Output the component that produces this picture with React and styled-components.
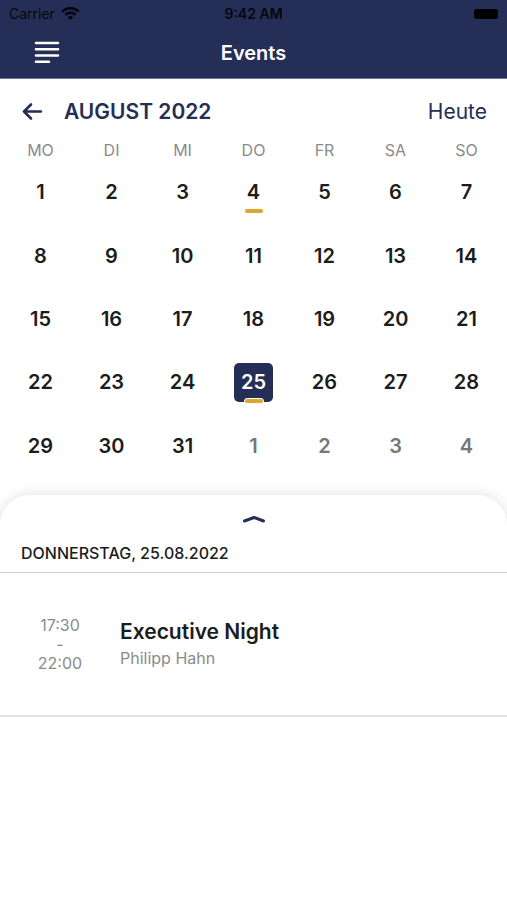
import React, { useState } from 'react';
import styled, { createGlobalStyle } from 'styled-components';

const NAVY = '#252e56';
const GOLD = '#dda62c';

const GlobalStyle = createGlobalStyle`
  * {
    box-sizing: border-box;
  }

  body {
    margin: 0;
    background: #fff;
    color: #1c1c1c;
    font-family: Inter, 'Liberation Sans', sans-serif;
  }

  button {
    padding: 0;
    border: 0;
    background: none;
    color: inherit;
    font: inherit;
    cursor: pointer;
  }
`;

const Page = styled.div`
  display: flex;
  flex-direction: column;
  min-height: 100vh;
  overflow: hidden;
`;

const Header = styled.header`
  background: ${NAVY};
  border-bottom: 1px solid #6e7594;
`;

const StatusBar = styled.div`
  display: grid;
  grid-template-columns: 1fr auto 1fr;
  align-items: center;
  height: 27px;
  padding: 0 9px;
  color: #05060c;
  font-size: 14px;
  line-height: 27px;

  strong {
    font-weight: 600;
  }
`;

const Carrier = styled.span`
  display: flex;
  align-items: center;
  gap: 6px;
`;

const Battery = styled.span`
  justify-self: end;
  width: 24px;
  height: 10px;
  border-radius: 3px;
  background: #000;
`;

const NavBar = styled.div`
  display: grid;
  grid-template-columns: 1fr auto 1fr;
  align-items: center;
  height: 51px;
  padding: 0 34px;
  color: #fff;

  h1 {
    margin: 0;
    font-size: 20px;
    font-weight: 600;
    line-height: 24px;
  }
`;

const IconButton = styled.button`
  display: flex;
  justify-self: start;
`;

const MonthBar = styled.div`
  display: flex;
  align-items: center;
  gap: 20px;
  padding: 21px 20px 15px;
  color: ${NAVY};
  font-size: 21px;
  line-height: 24px;

  h2 {
    flex: 1;
    margin: 0;
    font-size: 21px;
    font-weight: 600;
  }
`;

const Calendar = styled.table`
  width: calc(100% - 10px);
  height: 339px;
  margin: 0 5px;
  border-collapse: collapse;
  table-layout: fixed;

  th {
    height: 22px;
    padding: 0;
    color: #8b8b8b;
    font-size: 16px;
    font-weight: 400;
    line-height: 22px;
  }

  td {
    padding: 0;
    text-align: center;
    vertical-align: middle;
  }
`;

const DayButton = styled.button`
  position: relative;
  width: 39px;
  height: 39px;
  border-radius: 5px;
  background: ${(p) => (p.$selected ? NAVY : 'transparent')};
  color: ${(p) => (p.$selected ? '#fff' : p.$outside ? '#777' : '#1c1c1c')};
  font-size: 20px;
  font-weight: 600;
  line-height: 39px;
  vertical-align: middle;
`;

const EventMark = styled.span`
  position: absolute;
  bottom: -2px;
  left: 50%;
  width: 20px;
  height: 6px;
  margin-left: -10px;
  border: 1px solid #fff;
  border-radius: 3px;
  background: ${GOLD};
`;

const Sheet = styled.section`
  flex: 1;
  margin-top: 17px;
  border-radius: 30px 30px 0 0;
  box-shadow: 0 0 14px rgba(0, 0, 0, 0.13);
`;

const SheetToggle = styled.button`
  display: flex;
  justify-content: center;
  width: 100%;
  padding: 18px 0 12px;
`;

const DateTitle = styled.h3`
  margin: 0;
  padding: 6px 21px 9px;
  border-bottom: 1px solid #cfcfcf;
  font-size: 16px;
  font-weight: 500;
  line-height: 20px;
`;

const EventRow = styled.article`
  display: flex;
  align-items: center;
  height: 144px;
  border-bottom: 2px solid #e2e2e2;
`;

const EventTime = styled.div`
  display: flex;
  flex-direction: column;
  width: 120px;
  color: #8b8b8b;
  font-size: 16px;
  line-height: 19px;
  text-align: center;
`;

const EventInfo = styled.div`
  h4 {
    margin: 0;
    font-size: 21px;
    font-weight: 600;
    line-height: 28px;
  }

  p {
    margin: 0;
    color: #8b8b8b;
    font-size: 16px;
    line-height: 24px;
  }
`;

const WifiIcon = () => (
  <svg width="19" height="14" viewBox="0 0 19 14" fill="none" stroke="#05060c" strokeWidth="2.7" aria-hidden="true">
    <path d="M1.2 4.6a11.8 11.8 0 0 1 16.6 0" />
    <path d="M4.3 7.8a7.4 7.4 0 0 1 10.4 0" />
    <path d="M9.5 13.1 6.7 10.3a4 4 0 0 1 5.6 0z" fill="#05060c" stroke="none" />
  </svg>
);

const MenuIcon = () => (
  <svg width="26" height="24" viewBox="0 0 26 24" stroke="#fff" strokeWidth="2.6" strokeLinecap="round">
    <path d="M2 2h22M2 8.2h22M2 14.5h22M2 20.7h13" />
  </svg>
);

const ArrowLeftIcon = () => (
  <svg width="24" height="20" viewBox="0 0 24 20" fill="none" stroke={NAVY} strokeWidth="2.6" strokeLinecap="round" strokeLinejoin="round">
    <path d="M21 9.5H4M11 2.5l-7 7 7 7" />
  </svg>
);

const ChevronUpIcon = () => (
  <svg width="24" height="12" viewBox="0 0 24 12" fill="none" stroke={NAVY} strokeWidth="3" strokeLinecap="round" strokeLinejoin="round">
    <path d="M2.5 8 12 4.5 21.5 8" />
  </svg>
);

const weekdays = ['MO', 'DI', 'MI', 'DO', 'FR', 'SA', 'SO'];
const weeks = [0, 1, 2, 3, 4];
const DAYS_IN_MONTH = 31;
const daysWithEvents = [4, 25];

const events = [{ day: 25, start: '17:30', end: '22:00', title: 'Executive Night', host: 'Philipp Hahn' }];

const App = () => {
  const [selected, setSelected] = useState(25);

  const dayNames = ['Montag', 'Dienstag', 'Mittwoch', 'Donnerstag', 'Freitag', 'Samstag', 'Sonntag'];
  const dayName = dayNames[(selected - 1) % 7].toUpperCase();
  const dayEvents = events.filter((e) => e.day === selected);

  return (
    <Page>
      <GlobalStyle />
      <Header>
        <StatusBar>
          <Carrier>
            Carrier <WifiIcon />
          </Carrier>
          <strong>9:42 AM</strong>
          <Battery />
        </StatusBar>
        <NavBar>
          <IconButton aria-label="Menü">
            <MenuIcon />
          </IconButton>
          <h1>Events</h1>
        </NavBar>
      </Header>

      <MonthBar>
        <IconButton aria-label="Vorheriger Monat">
          <ArrowLeftIcon />
        </IconButton>
        <h2>AUGUST 2022</h2>
        <button onClick={() => setSelected(25)}>Heute</button>
      </MonthBar>

      <Calendar>
        <thead>
          <tr>
            {weekdays.map((name) => (
              <th key={name} scope="col">{name}</th>
            ))}
          </tr>
        </thead>
        <tbody>
          {weeks.map((week) => (
            <tr key={week}>
              {weekdays.map((name, i) => {
                const day = week * 7 + i + 1;
                const outside = day > DAYS_IN_MONTH;
                return (
                  <td key={name}>
                    <DayButton
                      $selected={day === selected}
                      $outside={outside}
                      onClick={() => !outside && setSelected(day)}
                    >
                      {outside ? day - DAYS_IN_MONTH : day}
                      {daysWithEvents.includes(day) && <EventMark />}
                    </DayButton>
                  </td>
                );
              })}
            </tr>
          ))}
        </tbody>
      </Calendar>

      <Sheet>
        <SheetToggle aria-label="Liste vergrößern">
          <ChevronUpIcon />
        </SheetToggle>
        <DateTitle>
          {dayName}, {String(selected).padStart(2, '0')}.08.2022
        </DateTitle>
        {dayEvents.map((event) => (
          <EventRow key={event.title}>
            <EventTime>
              <span>{event.start}</span>
              <span>-</span>
              <span>{event.end}</span>
            </EventTime>
            <EventInfo>
              <h4>{event.title}</h4>
              <p>{event.host}</p>
            </EventInfo>
          </EventRow>
        ))}
      </Sheet>
    </Page>
  );
};

export default App;
